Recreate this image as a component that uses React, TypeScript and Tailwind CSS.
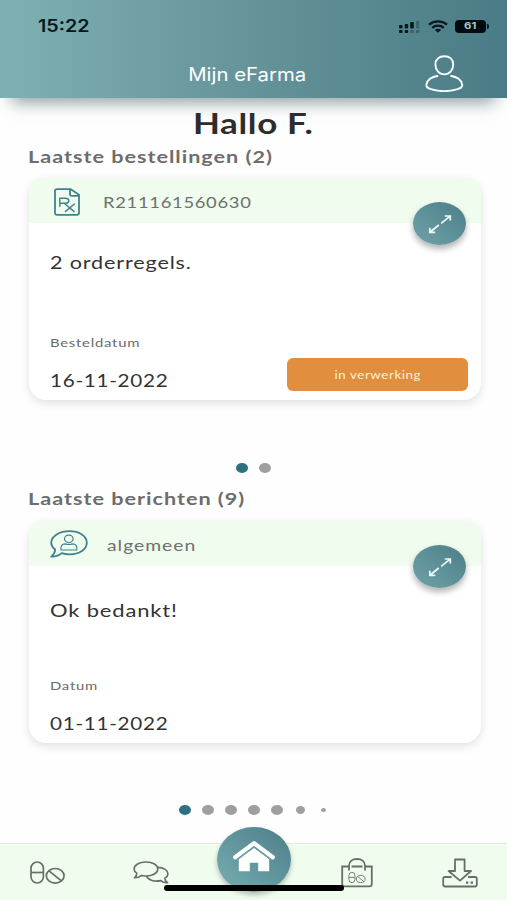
import React from "react";

const lato = "font-['Lato','Noto_Sans',sans-serif]";

function PrescriptionIcon() {
  return (
    <svg className="h-[28px] w-[26px]" viewBox="0 0 26 28" fill="none" stroke="#43808d" strokeLinejoin="round" strokeLinecap="round">
      <path d="M3.2 1.2H16.8L25 6.8V24.8Q25 26.8 22.8 26.8H3.2Q1 26.8 1 24.8V3Q1 1.2 3.2 1.2Z" strokeWidth="1.8" />
      <path d="M16 1.6V6.4Q16 7.8 17.6 7.8H24.6" strokeWidth="1.8" />
      <path d="M5.8 18.4V10.2H11.4Q14.8 10.2 14.8 12.7T11.4 15.2H5.8M10.2 15.2L20.2 23.6M20.4 16L11.4 23.6" strokeWidth="1.4" />
    </svg>
  );
}

function MessageIcon() {
  return (
    <svg className="h-[28px] w-[38px]" viewBox="0 0 38 28" fill="none" stroke="#43808d" strokeLinejoin="round" strokeLinecap="round">
      <path d="M19.5 1.2C29.5 1.2 36.8 6.2 36.8 12.8S29.5 24.4 19.5 24.4C16.6 24.4 14 24 11.6 23.2C8.8 26 5.4 26.7 1.2 26.6C3.6 24.8 5 22.8 5.2 19.8C2.6 17.6 1.2 15.2 1.2 12.8C1.2 6.2 9.5 1.2 19.5 1.2Z" strokeWidth="1.8" />
      <ellipse cx="18.8" cy="8.8" rx="4.3" ry="3.7" strokeWidth="1.2" />
      <path d="M11 20Q10.2 13.9 15.4 13.9Q18.8 15 22.4 13.9Q27.6 13.9 26.8 20Z" strokeWidth="1.2" />
    </svg>
  );
}

function ExpandButton() {
  return (
    <button className="absolute top-[24px] right-[15px] flex h-[43px] w-[53px] items-center justify-center rounded-[50%] bg-linear-to-tr from-[#6fa3a8] to-[#4c7e88] shadow-[0_4px_6px_rgba(0,0,0,0.3)]">
      <svg className="h-[20px] w-[24px]" viewBox="0 0 24 20" fill="none" stroke="#eefafa" strokeWidth="1.7">
        <path d="M13.2 9.4L21.8 2.4M16.8 2H22.3V6.6M10.8 11L2.2 18M7.2 18.3H1.8V13.8" />
      </svg>
    </button>
  );
}

type CardProps = {
  icon: React.ReactNode;
  title: React.ReactNode;
  body: React.ReactNode;
  label: React.ReactNode;
  date: React.ReactNode;
  status?: React.ReactNode;
};

function Card({ icon, title, body, label, date, status }: CardProps) {
  return (
    <article className="relative ml-[29px] flex h-[222px] w-[452px] flex-col rounded-[17px] bg-white shadow-[0_3px_10px_rgba(0,0,0,0.12)]">
      <header className="flex h-[45px] items-center rounded-t-[14px] bg-[#f0fcee] text-[16px] text-[#6f716f]">
        {icon}
        {title}
      </header>
      <div className="flex flex-1 flex-col px-[21px] text-[#333]">
        <div className="flex h-[111px] flex-col pt-[27px] text-[18px] leading-6">{body}</div>
        <p className="text-[12px] leading-[18px] text-[#6b6b6b]">{label}</p>
        <p className="mt-[16px] text-[18px] leading-6">{date}</p>
      </div>
      {status}
      <ExpandButton />
    </article>
  );
}

function CapsuleShapes() {
  return (
    <>
      <rect x="1" y="1" width="12.4" height="21" rx="6.2" />
      <path d="M1 11.5H13.4" />
      <ellipse cx="25.2" cy="14.8" rx="8.9" ry="7.3" />
      <path d="M19 9.8L31.4 19.8" />
    </>
  );
}

function Dot({ className }: { className: string }) {
  return <span className={`rounded-[50%] ${className}`} />;
}

export default function App() {
  return (
    <div className={`flex h-[900px] w-[507px] flex-col overflow-hidden bg-[#fefefe] ${lato}`}>
      <header className="relative h-[98px] shrink-0 bg-linear-to-r from-[#7fb1b4] via-[#649399] to-[#4a7c87] font-['Inter',sans-serif] shadow-[0_16px_16px_-12px_rgba(40,70,75,0.55)]">
        <div className="flex h-[53px] items-center pl-[38px] pr-[18px]">
          <span className="mt-px origin-left scale-x-[1.16] text-[17px] font-semibold text-[#07181c]">15:22</span>
          <svg className="ml-auto h-[12px] w-[23px]" viewBox="0 0 23 12">
            <g fill="#07181c">
              <rect x="1" y="4" width="3.5" height="3.4" rx=".8" /><rect x="6.7" y="3" width="3.5" height="4.4" rx=".8" /><rect x="12.2" y="1" width="3.6" height="6.4" rx=".8" />
              <rect x="1" y="9" width="3.5" height="3" rx=".8" /><rect x="6.7" y="9" width="3.5" height="3" rx=".8" />
            </g>
            <g fill="#07181c" opacity=".3"><rect x="12.2" y="9" width="3.6" height="3" /><rect x="18" y="0" width="3.3" height="7.4" /><rect x="18" y="9" width="3.3" height="3" /></g>
          </svg>
          <svg className="ml-[7px] h-[13px] w-[20px]" viewBox="0 0 20 13" fill="none" stroke="#07181c" strokeWidth="2.3">
            <path d="M1 4.6C6 .3 14 .3 19 4.6M4.2 7.8C7.4 5 12.6 5 15.8 7.8" />
            <path d="M10 12.8L6.8 10Q10 7.7 13.2 10Z" fill="#07181c" stroke="none" />
          </svg>
          <span className="ml-[7px] flex h-[13px] w-[31px] items-center justify-center rounded-[4px] bg-[#020b0d] text-[9.5px] font-bold text-[#a9c4c7]">
            <span className="scale-x-[1.2]">61</span>
          </span>
          <span className="ml-px h-[5px] w-[2px] rounded-r-full bg-[#07181c]" />
        </div>
        <div className="relative flex h-[42px] items-center justify-center pr-[13px]">
          <span className="scale-x-[1.13] text-[18px] text-white">Mijn eFarma</span>
          <svg className="absolute top-[2px] left-[425px] h-[37px] w-[39px]" viewBox="0 0 39 37" fill="none" stroke="#f4ffff" strokeWidth="1.9">
            <path d="M19.3 1.3C24.6 1.3 28.2 4.5 28.2 9.4C28.2 14.8 24.6 19.4 19.3 19.4S10.4 14.8 10.4 9.4C10.4 4.5 14 1.3 19.3 1.3Z" />
            <path d="M13.2 20.8C6.8 21.9 2.2 24.2 1.4 29.6C1 32.4 3.6 33.5 6 34.2C14.4 36.7 24.2 36.7 32.6 34.2C35 33.5 37.6 32.4 37.2 29.6C36.4 24.2 31.8 21.9 25.4 20.8" />
          </svg>
        </div>
      </header>

      <main className="flex flex-1 flex-col">
        <h1 className="mt-[7px] h-[36px] text-center text-[28px] leading-9 font-bold text-[#2d2d2d]">
          <span className="inline-block scale-x-[1.25] tracking-[0.5px]">Hallo F.</span>
        </h1>
        <h2 className="mt-[4px] h-6 pl-[28px] text-[17.5px] leading-6 font-bold text-[#6d6d6d]">
          <span className="inline-block origin-left scale-x-[1.235] tracking-[0.8px]">Laatste bestellingen (2)</span>
        </h2>
        <div className="mt-[9px]">
          <Card
            icon={<span className="ml-[25px] mt-[3px]"><PrescriptionIcon /></span>}
            title={<span className="ml-[23px] mt-[2px] origin-left scale-x-[1.15] tracking-[0.6px]">R211161560630</span>}
            body={<span className="origin-left scale-x-[1.2] tracking-[0.7px]">2 orderregels.</span>}
            label={<span className="inline-block origin-left scale-x-[1.24] tracking-[0.6px]">Besteldatum</span>}
            date={<span className="inline-block origin-left scale-x-[1.15] tracking-[0.6px]">16-11-2022</span>}
            status={
              <div className="absolute right-[13px] bottom-[9px] flex h-[33px] w-[181px] items-center justify-center rounded-[6px] bg-[#e18f3e] pt-px text-[11px] text-[#fff0d8]">
                <span className="scale-x-[1.21] tracking-[0.5px]">in verwerking</span>
              </div>
            }
          />
        </div>
        <div className="mt-[62px] flex h-[12px] items-center justify-center gap-[11px] pr-px">
          <Dot className="h-[10px] w-[12px] bg-[#2c7180]" />
          <Dot className="h-[10px] w-[12px] bg-[#9f9f9f]" />
        </div>
        <h2 className="mt-[13px] h-6 pl-[28px] text-[17.5px] leading-6 font-bold text-[#6d6d6d]">
          <span className="inline-block origin-left scale-x-[1.235] tracking-[0.8px]">Laatste berichten (9)</span>
        </h2>
        <div className="mt-[10px]">
          <Card
            icon={<span className="ml-[21px]"><MessageIcon /></span>}
            title={<span className="ml-[19px] mt-[2px] origin-left scale-x-[1.21] tracking-[0.8px]">algemeen</span>}
            body={<span className="mt-[5px] origin-left scale-x-[1.22] tracking-[0.7px]">Ok bedankt!</span>}
            label={<span className="inline-block origin-left scale-x-[1.24] tracking-[0.6px]">Datum</span>}
            date={<span className="inline-block origin-left scale-x-[1.15] tracking-[0.6px]">01-11-2022</span>}
          />
        </div>
        <div className="mt-[61px] flex h-[12px] items-center justify-center gap-[11px] pr-[3px]">
          <Dot className="h-[10px] w-[12px] bg-[#2c7180]" />
          <Dot className="h-[10px] w-[12px] bg-[#9f9f9f]" />
          <Dot className="h-[10px] w-[12px] bg-[#9f9f9f]" />
          <Dot className="h-[10px] w-[12px] bg-[#9f9f9f]" />
          <Dot className="h-[10px] w-[12px] bg-[#9f9f9f]" />
          <Dot className="ml-[2px] h-[8px] w-[9px] bg-[#9f9f9f]" />
          <Dot className="ml-[5px] h-[4px] w-[5px] bg-[#9f9f9f]" />
        </div>
      </main>

      <nav className="relative flex h-[57px] shrink-0 items-start border-t border-[#e3ebe1] bg-[#f0fcee]">
        <svg className="mt-[17px] ml-[30px] h-[23px] w-[36px] shrink-0" viewBox="0 0 36 23" fill="none" stroke="#686f68" strokeWidth="1.7">
          <CapsuleShapes />
        </svg>
        <svg className="mt-[17px] ml-[67px] h-[23px] w-[36px] shrink-0" viewBox="0 0 36 23" fill="none" stroke="#686f68" strokeWidth="1.6" strokeLinejoin="round">
          <path d="M13 1C19.8 1 24.8 4 24.8 8S19.8 15 13 15C11.3 15 9.8 14.8 8.4 14.4C6.5 16.2 4.2 16.9 1.4 16.8C3.1 15.4 3.9 13.9 3.8 12.2C2.1 11.1 1.1 9.6 1.1 8C1.1 4 6.2 1 13 1Z" />
          <path d="M25 6.4C30.8 6.6 34.9 9.2 34.9 12.8C34.9 14.6 33.7 16.2 31.8 17.3C31.9 19 32.8 20.4 34.6 21.8C31.8 21.9 29.5 21.2 27.8 19.6C21.7 21 15.5 19.4 13.4 15.2" />
        </svg>
        <div className="absolute top-[-17px] left-[217px] flex h-[65px] w-[74px] justify-center rounded-[50%] bg-linear-to-tr from-[#78aeb2] to-[#4c7e88] shadow-[0_3px_5px_rgba(0,0,0,0.25)]">
          <svg className="mt-[14px] h-[31px] w-[42px]" viewBox="0 0 42 31">
            <path d="M2.2 16.2L21 2.2L39.8 16.2" fill="none" stroke="white" strokeWidth="4.2" strokeLinecap="round" strokeLinejoin="round" />
            <path d="M5.8 18L21 6.8L36.2 18V30.3H25.2V21.8H16.8V30.3H5.8Z" fill="white" />
            <path d="M3.5 19L21 6L38.5 19" fill="none" stroke="#69a0a6" strokeWidth="1.4" />
          </svg>
        </div>
        <svg className="mt-[14px] ml-[172px] h-[30px] w-[32px] shrink-0" viewBox="0 0 32 30" fill="none" stroke="#686f68" strokeWidth="1.8">
          <path d="M8 8.5H1.2V26Q1.2 28.4 3.8 28.4H28.2Q30.8 28.4 30.8 26V8.5H24M10.5 8.5H21.5M8 12.5V7.8C8 3.5 11.5 1 16 1S24 3.5 24 7.8V12.5" />
          <g transform="translate(7.4 13.8) scale(.49)"><CapsuleShapes /></g>
        </svg>
        <svg className="mt-[14px] ml-[69px] h-[30px] w-[36px] shrink-0" viewBox="0 0 36 30" fill="none" stroke="#686f68" strokeWidth="1.8" strokeLinejoin="round">
          <path d="M13 1.5H22.6V13H29L18 22.6L6.6 13H13Z" />
          <path d="M9.6 19H3Q1.2 19 1.2 20.8V26.6Q1.2 28.5 3 28.5H33Q34.8 28.5 34.8 26.6V20.8Q34.8 19 33 19H26" />
          <path d="M24 24.7H26.3M28.6 24.7H31" strokeWidth="2.2" />
        </svg>
        <div className="absolute top-[41px] left-[164px] h-[6px] w-[180px] rounded-full bg-black" />
      </nav>
    </div>
  );
}
